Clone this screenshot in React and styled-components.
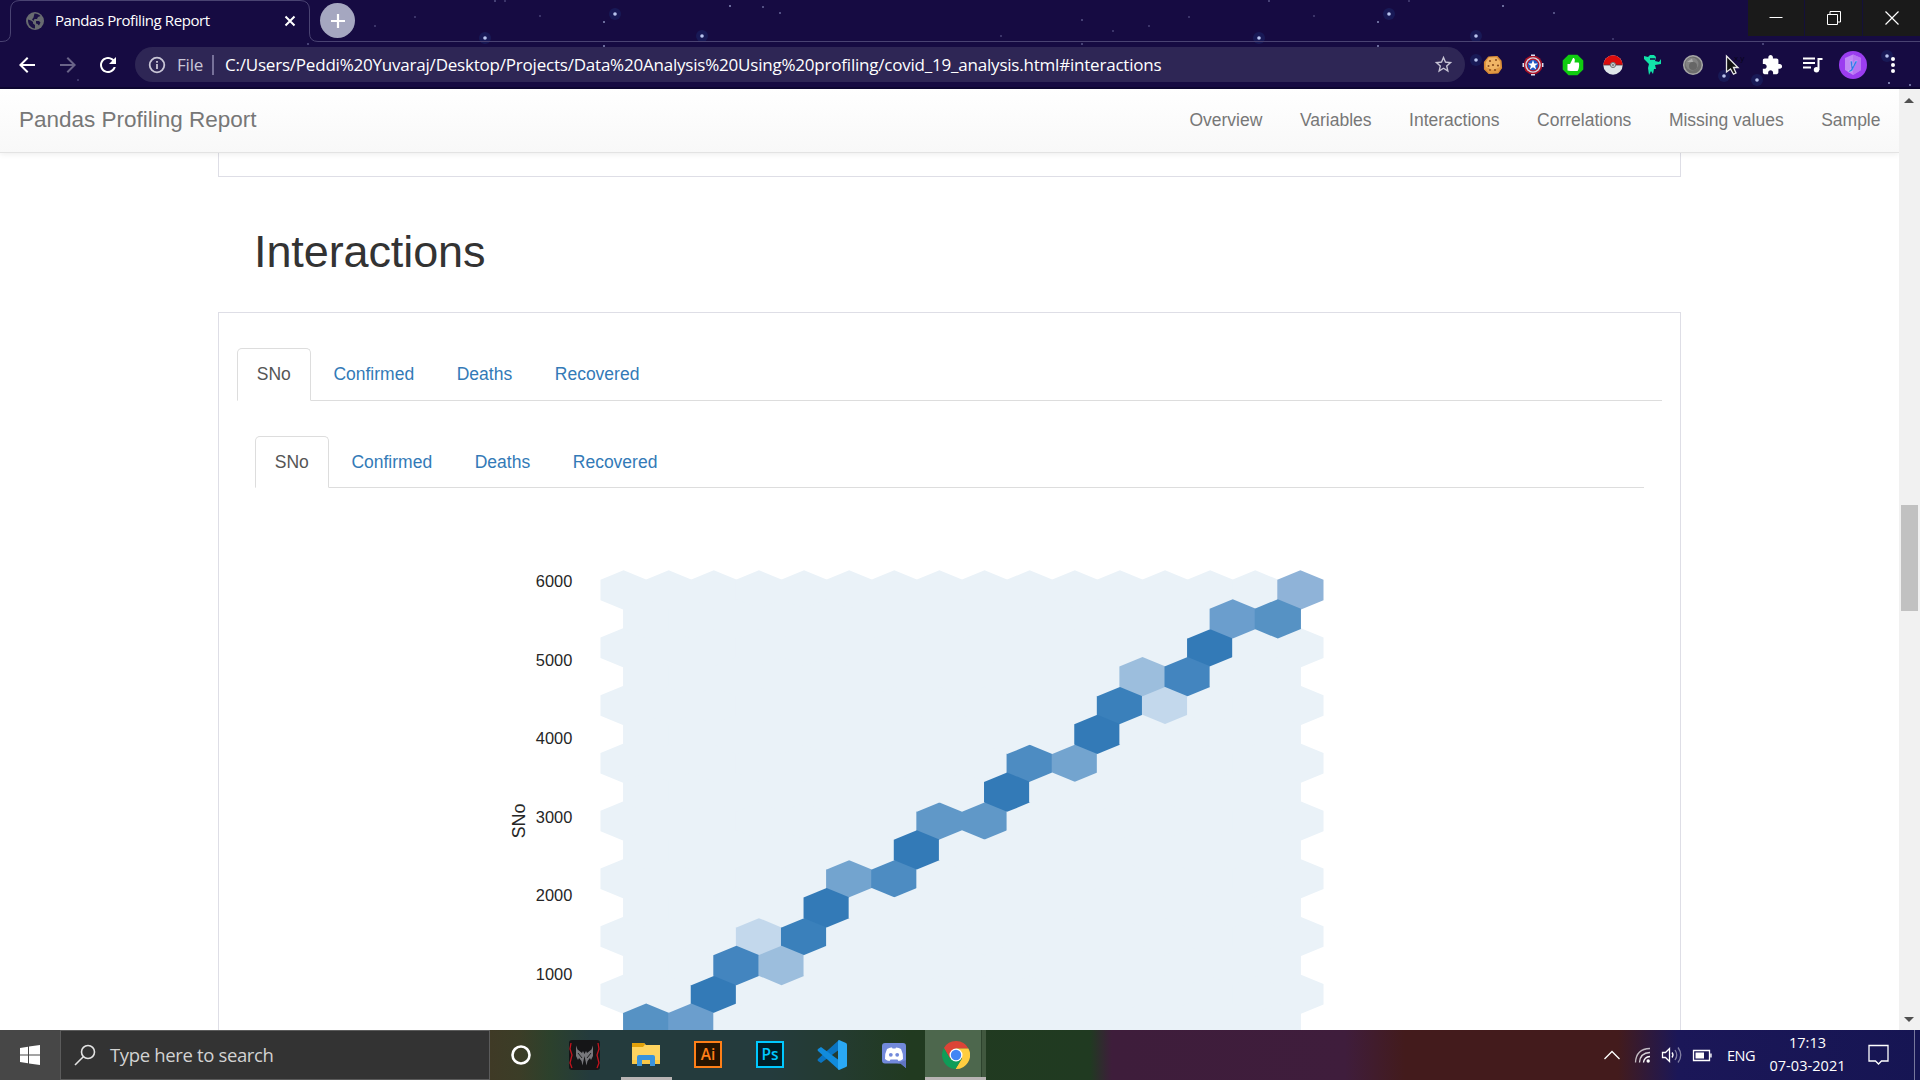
import React from "react";
import styled, { createGlobalStyle, css } from "styled-components";

const ui = `"Open Sans", "Noto Sans", sans-serif`;
const page = `"Liberation Sans", Arial, sans-serif`;

const Global = createGlobalStyle`
  *, *::before, *::after { box-sizing: border-box; }
  body { margin: 0; overflow: hidden; background: #fff; }
  svg { display: block; flex: none; }
`;

const Screen = styled.div`
  width: 1920px;
  height: 1080px;
  display: flex;
  flex-direction: column;
  overflow: hidden;
  font-family: ${page};
`;

/* ---------- browser frame ---------- */
const Frame = styled.header`
  position: relative;
  height: 89px;
  flex: none;
  display: flex;
  flex-direction: column;
  background: #160b42;
  border-bottom: 2px solid #0d0630;
  color: #fff;
  font-family: ${ui};
`;
const Sky = styled.svg`
  position: absolute;
  inset: 0;
`;
const TabStrip = styled.div`
  position: relative;
  height: 42px;
  display: flex;
  align-items: flex-start;
`;
const TabOutline = styled.svg`
  position: absolute;
  left: 0;
  top: 0;
`;
const BrowserTab = styled.div`
  position: relative;
  width: 310px;
  height: 42px;
  padding: 0 12px 0 26px;
  display: flex;
  align-items: center;
`;
const TabTitle = styled.span`
  flex: 1;
  margin-left: 11px;
  padding-bottom: 2px;
  font-size: 15px;
  letter-spacing: -0.42px;
  white-space: nowrap;
`;
const NewTab = styled.div`
  position: relative;
  width: 35px;
  height: 35px;
  margin: 3px 0 0 10px;
  border-radius: 50%;
  background: #a5a7c0;
  display: grid;
  place-items: center;
`;
const WindowButtons = styled.div`
  margin-left: auto;
  display: flex;
  gap: 1px;
  background: #141039;
`;
const WindowButton = styled.div`
  width: ${(p) => p.$width}px;
  height: 36px;
  background: #1a1a1a;
  display: grid;
  place-items: center;
`;
const Toolbar = styled.div`
  position: relative;
  height: 45px;
  display: flex;
  align-items: center;
  padding: 0 16px 0 15px;
`;
const NavButtons = styled.div`
  width: 120px;
  display: flex;
  gap: 16.5px;
`;
const Omnibox = styled.div`
  width: 1330px;
  height: 35px;
  border-radius: 18px;
  background: #2e2655;
  display: flex;
  align-items: center;
  padding: 0 11px 0 13px;
  font-size: 17px;
  white-space: nowrap;
`;
const Scheme = styled.span`
  width: 27px;
  margin-left: 11px;
  color: #c9c6d6;
  letter-spacing: -0.2px;
`;
const Divider = styled.i`
  width: 2px;
  height: 20px;
  margin: 0 11px 0 8px;
  background: #77719a;
`;
const Address = styled.span`
  flex: 1;
  letter-spacing: -0.21px;
`;
const Extensions = styled.div`
  margin-left: 14px;
  display: flex;
  gap: 12px;
`;
const ToolbarEnd = styled.div`
  width: 143px;
  margin-left: auto;
  padding-right: 8px;
  display: flex;
  align-items: center;
  justify-content: space-between;
`;

/* ---------- report page ---------- */
const Viewport = styled.div`
  height: 941px;
  flex: none;
  display: flex;
  overflow: hidden;
  background: #fff;
`;
const Report = styled.main`
  width: 1899px;
  height: 941px;
  overflow: hidden;
  display: flex;
  flex-direction: column;
`;
const Navbar = styled.nav`
  position: relative;
  z-index: 1;
  height: 64px;
  flex: none;
  padding: 0 18.5px 0 19px;
  display: flex;
  justify-content: space-between;
  align-items: center;
  background: linear-gradient(#fff, #f8f8f8);
  border-bottom: 1px solid #e3e3e3;
  box-shadow: 0 1px 6px rgba(0, 0, 0, 0.08);
  color: #777;
`;
const Brand = styled.span`
  padding-bottom: 1px;
  font-size: 22.5px;
  letter-spacing: -0.01px;
`;
const NavLinks = styled.div`
  display: flex;
  gap: 37.5px;
  font-size: 17.5px;
`;
const boxLine = "#dedee6";
const Content = styled.div`
  width: 1463px;
  margin: 0 0 0 218px;
  flex: 1;
  display: flex;
  flex-direction: column;
`;
const PreviousPanel = styled.div`
  height: 24px;
  flex: none;
  border: 1px solid ${boxLine};
  border-top: 0;
`;
const Heading = styled.h1`
  height: 135px;
  flex: none;
  margin: 0;
  padding: 50px 0 0 36px;
  font-size: 45px;
  line-height: 49px;
  letter-spacing: -0.1px;
  font-weight: 400;
  color: #333;
`;
const Panel = styled.section`
  flex: 1;
  border: 1px solid ${boxLine};
  border-bottom: 0;
  padding: 35px 18px 0;
`;
const Inner = styled.div`
  padding: 35px 18px 0;
`;
const TabList = styled.div`
  display: flex;
  gap: 3.1px;
  height: ${(p) => p.$height}px;
  border-bottom: 1px solid #ddd;
`;
const Tab = styled.a`
  height: ${(p) => p.$height}px;
  padding: 0 18.75px;
  line-height: 50px;
  font-size: 17.5px;
  color: #337ab7;
  border: 1px solid transparent;
  border-radius: 5px 5px 0 0;
  ${(p) =>
    p.$active &&
    css`
      color: #555;
      background: #fff;
      border-color: #ddd;
      border-bottom-color: #fff;
    `}
`;
const ChartArea = styled.div`
  padding-top: 52px;
`;
const Chart = styled.svg`
  margin: 0 0 0 245px;
  font-family: ${page};
`;

const Scrollbar = styled.div`
  width: 21px;
  height: 941px;
  background: #f1f1f1;
  display: flex;
  flex-direction: column;
  align-items: center;
`;
const ScrollArrow = styled.svg`
  width: 21px;
  height: 21px;
`;
const Thumb = styled.div`
  width: 17px;
  height: 106px;
  margin-top: 395px;
  margin-bottom: auto;
  background: #c1c1c1;
`;

/* ---------- taskbar ---------- */
const Taskbar = styled.footer`
  height: 50px;
  flex: none;
  display: flex;
  font-family: ${ui};
  color: #fff;
  background: linear-gradient(
    90deg,
    #3f3a26 490px,
    #3b3d27 520px,
    #2c412c 550px,
    #243b3d 590px,
    #243b3d 770px,
    #243b30 840px,
    #213a20 910px,
    #203a21 1090px,
    #3e1d3b 1112px,
    #3f1d3c 1345px,
    #431b1c 1405px,
    #431b1c 1618px,
    #1b1758 1678px,
    #161553 1920px
  );
`;
const Start = styled.div`
  width: 60px;
  background: #474747;
  display: grid;
  place-items: center;
`;
const Search = styled.div`
  width: 430px;
  border: 1px solid #5b5b5b;
  background: #333;
  display: flex;
  align-items: center;
  padding-left: 13px;
`;
const SearchHint = styled.span`
  margin-left: 14px;
  padding-bottom: 2px;
  font-size: 18.5px;
  letter-spacing: -0.35px;
  color: #d2d2d2;
`;
const Apps = styled.div`
  display: flex;
  margin-left: -2px;
`;
const TaskButton = styled.div`
  width: ${(p) => p.$width || 62}px;
  height: 50px;
  display: flex;
  flex-direction: column;
  align-items: center;
  padding-top: 10px;
  ${(p) =>
    p.$active &&
    css`
      background: linear-gradient(90deg, #4d674d 56px, #2d432d 56px, #2d432d 57px, #41583f 57px);
      border-bottom: 3px solid #b8b4b4;
    `}
`;
const RunningMark = styled.i`
  width: 51px;
  height: 3px;
  margin-top: 7px;
  background: #b8b4b4;
`;
const Tile = styled.div`
  width: 28px;
  height: 27px;
  margin-top: 0.5px;
  border: 2px solid ${(p) => p.$tone};
  background: ${(p) => p.$fill};
  color: ${(p) => p.$tone};
  font: 600 15.5px/22px ${ui};
  text-align: center;
`;
const Tray = styled.div`
  margin-left: auto;
  display: flex;
  align-items: center;
  font-size: 14.5px;
`;
const Lang = styled.span`
  width: 44px;
  padding-left: 9px;
  letter-spacing: -0.5px;
`;
const Clock = styled.div`
  width: 77px;
  margin-left: 7px;
  padding-bottom: 2px;
  display: flex;
  flex-direction: column;
  align-items: center;
  line-height: 23px;
  letter-spacing: 0.05px;
  white-space: nowrap;
`;
const NoticeIcon = styled.svg`
  margin-left: 22px;
`;
const ShowDesktop = styled.i`
  width: 6px;
  height: 50px;
  margin-left: 24px;
  border-left: 1px solid #77779c;
`;

/* ---------- data ---------- */
const stars = [
  [485, 38, 1], [615, 14, 1], [702, 36, 1], [1259, 38, 1], [1389, 14, 1], [1476, 36, 1], [1476, 60, 1],
  [1724, 76, 1], [1757, 80, 1], [1887, 56, 1], [1889, 83, 0.8], [1910, 85, 0.7],
  [604, 22, 0.7], [604, 46, 0.7], [375, 26, 0.3], [415, 17, 0.3], [540, 16, 0.3], [495, 1, 0.4], [505, 1, 0.3],
  [308, 44, 0.4], [78, 80, 0.3], [730, 6, 0.7], [763, 7, 0.5], [780, 13, 0.5], [1001, 36, 0.3], [1082, 20, 0.4],
  [1082, 44, 0.4], [1113, 31, 0.3], [1149, 26, 0.3], [1189, 17, 0.3], [1269, 1, 0.4], [1378, 22, 0.7],
  [1378, 46, 0.7], [1314, 16, 0.3], [1409, 1, 0.3], [1503, 6, 0.7], [1554, 13, 0.5], [1763, 44, 0.4], [1613, 39, 0.3],
];

const ROW = 28.88;
const COL = 45.12;
const hexes = [
  [0, 15, "#8fb3d8"],
  [2, 13, "#337ab7"],
  [4, 11, "#3a80bb"], [4, 12, "#c3d8ec"],
  [6, 9, "#4d8cc2"], [6, 10, "#73a4cf"],
  [8, 7, "#6098c8"], [8, 8, "#6098c8"],
  [10, 5, "#73a4cf"], [10, 6, "#4d8cc2"],
  [12, 3, "#c3d8ec"], [12, 4, "#3a80bb"],
  [14, 2, "#337ab7"],
  [1, 13, "#6b9ecd"], [1, 14, "#5692c4"],
  [3, 11, "#9cbedd"], [3, 12, "#4385bf"],
  [5, 10, "#337ab7"],
  [7, 8, "#337ab7"],
  [9, 6, "#337ab7"],
  [11, 4, "#337ab7"],
  [13, 2, "#4385bf"], [13, 3, "#9cbedd"],
  [15, 0, "#5692c4"], [15, 1, "#6b9ecd"],
];
const hexPoints = (row, col) => {
  const x = 123.6 + col * COL + (row % 2 ? COL / 2 : 0);
  const y = 50 + row * ROW;
  const w = 23.1;
  return [[0, -19.7], [w, -10.2], [w, 10.2], [0, 19.7], [-w, 10.2], [-w, -10.2]]
    .map(([dx, dy]) => `${(x + dx).toFixed(2)},${(y + dy).toFixed(2)}`)
    .join(" ");
};
const grid = [0, 1].flatMap((parity) =>
  Array.from({ length: 8 }, (_, r) => r * 2 + parity).flatMap((row) =>
    Array.from({ length: parity ? 15 : 16 }, (_, col) => {
      const hit = hexes.find((h) => h[0] === row && h[1] === col);
      return { row, col, fill: hit ? hit[2] : "#eaf2f8" };
    })
  )
);
const ticks = [6000, 5000, 4000, 3000, 2000, 1000];
const columns = ["SNo", "Confirmed", "Deaths", "Recovered"];
const links = ["Overview", "Variables", "Interactions", "Correlations", "Missing values", "Sample"];

/* ---------- icons ---------- */
const Globe = () => (
  <svg width="18" height="18" viewBox="0 0 18 18">
    <circle cx="9" cy="9" r="9" fill="#686b70" />
    <path d="M2 7.500 L5 8.500 L7 10 V11.500 L9 13 V16.500 C4 16 1.800 12 2 7.500Z M8.500 1.500 C11 1.500 13 2.500 14.500 4 L12 5 L11 7 H8.500 L7.500 9 L6 7.500 L7.500 5.500Z M10 9 H13 L14.500 10.500 L13 13.500 L11.500 12 L10 11.500Z" fill="#1b1145" />
  </svg>
);
const Glyph = ({ d, size = 24, color = "#fff" }) => (
  <svg width={size} height={size} viewBox="0 0 24 24" fill={color}><path d={d} /></svg>
);
const Cookie = () => (
  <svg width="28" height="24" viewBox="0 0 28 24">
    <path d="M9.500 4 L18 3.500 L22 8 L22.500 15 L19 20 L10 20.500 L5.500 16 V9Z" fill="#e09a45" stroke="#d98a35" strokeWidth="1.200" strokeLinejoin="round" />
    <path d="M10 4.500 L17.500 4.500 L21 8.500 L21 14 L14 17 L7 14 L7 9Z" fill="#f0b565" />
    <g fill="#8a4b1c"><circle cx="11" cy="8" r="1.100" /><circle cx="17" cy="7" r="1" /><circle cx="14" cy="12" r="1.100" /><circle cx="19" cy="12.500" r="1.100" /><circle cx="9.500" cy="13" r="1" /><circle cx="16" cy="17" r="1.100" /><circle cx="11" cy="17" r="0.900" /></g>
  </svg>
);
const Shield = () => (
  <svg width="28" height="24" viewBox="0 0 28 24">
    <circle cx="14" cy="12" r="9.500" fill="#a81226" /><circle cx="14" cy="12" r="7.800" fill="#d5d9e4" /><circle cx="14" cy="12" r="6.400" fill="#b81428" /><circle cx="14" cy="12" r="5.300" fill="#1d58c4" />
    <path d="M14 7 L15.300 10.600 H19 L16.100 12.800 L17.200 16.400 L14 14.200 L10.800 16.400 L11.900 12.800 L9 10.600 H12.700Z" fill="#fff" />
    <path d="M12 2.300 H16 M12 21.700 H16 M4.300 10 V14 M23.700 10 V14" stroke="#dbe0f0" strokeWidth="1.500" />
  </svg>
);
const Thumbs = () => (
  <svg width="28" height="24" viewBox="0 0 28 24">
    <path d="M9.500 1.800 H18.500 L24.300 7.500 V16.500 L18.500 22.200 H9.500 L3.700 16.500 V7.500Z" fill="#10cc10" />
    <path d="M8.500 11 H11 L14 5 C16.300 5 16 7.500 15.500 9.500 H19.500 C20.800 10 20 17 18.500 18 H11.500 L8.500 17.500Z" fill="#fff" />
  </svg>
);
const Ball = () => (
  <svg width="28" height="24" viewBox="0 0 28 24">
    <circle cx="14" cy="12" r="9.700" fill="#dfe6e9" /><path d="M4.300 12 A9.700 9.700 0 0 1 23.700 12Z" fill="#dc0c0c" />
    <path d="M4.300 12 H23.700" stroke="#4c3540" strokeWidth="0.800" /><circle cx="14" cy="12" r="2.600" fill="#c6cbce" stroke="#777" /><circle cx="14" cy="12" r="1" fill="#777" />
  </svg>
);
const Imp = () => (
  <svg width="28" height="24" viewBox="0 0 28 24">
    <path d="M5 3 L9 4 L11 2 H15 L17 4 L16 8 L20 9 L22 6 L22 11 L16 12 L17 16 L15 16 L14 21 L12 18 L10 22 L9 15 L10 11 L7 8 L5 6Z" fill="#12e2a8" />
    <path d="M11 6 H16" stroke="#160b42" strokeWidth="1.500" />
  </svg>
);
const Orb = () => (
  <svg width="28" height="24" viewBox="0 0 28 24">
    <circle cx="14" cy="12" r="9.300" fill="#6d6d6d" stroke="#a6a6a6" strokeWidth="1.500" /><circle cx="13" cy="11" r="6.500" fill="#838383" /><circle cx="14" cy="13" r="4" fill="#666" /><path d="M8 9 L13 5.500 L14 9Z" fill="#aaa" />
  </svg>
);
const Pointer = () => (
  <svg width="28" height="24" viewBox="0 0 28 24" overflow="visible">
    <text x="15" y="7.500" fontFamily="Open Sans" fontSize="8" fill="#070418">x,y</text>
    <path d="M7.500 3 L19 14.500 H14.500 L17 20 L14.500 21.200 L11.500 16 L7.500 19Z" fill="#111" stroke="#e8e8e8" strokeWidth="1.300" />
  </svg>
);
const AvatarIcon = styled.svg`
  margin: 0 3px 0 -3px;
`;
const Avatar = () => (
  <AvatarIcon width="28" height="28" viewBox="0 0 28 28">
    <circle cx="14" cy="14" r="14" fill="#9b3df0" /><path d="M14 3.500 L22 7 V19 L14 24 L6 19 V7Z" fill="#c188f6" />
    <path d="M14 3.500 L22 7 V19 L14 24Z" fill="#b874f4" />
    <text x="14" y="17.500" textAnchor="middle" fontFamily="Open Sans" fontSize="14" fontStyle="italic" fontWeight="700" fill="#2673e8" stroke="#d8c6fa" strokeWidth="0.400">y</text>
  </AvatarIcon>
);
const Predator = () => (
  <svg width="31" height="30" viewBox="0 0 31 30">
    <rect width="31" height="30" rx="3" fill="#151517" /><path d="M2 3 L1 9 L3 15 L1 23 L3 28 M29 3 L30 9 L28 15 L30 23 L28 28" stroke="#c3131d" strokeWidth="1.300" fill="none" />
    <path d="M7 5.500 L8.500 9.500 L13 13 L14 11 L15.500 14 L17 11 L18 13 L22.500 9.500 L24 5.500 V16 L22 20 L21 18 L18.500 21 L17.500 25.500 L15.500 16 L13.500 25.500 L12.500 21 L10 18 L9 20 L7 16Z" fill="#77777b" />
    <path d="M9 13 L13 18 M22 13 L18 18" stroke="#222" />
  </svg>
);
const Explorer = () => (
  <svg width="28" height="30" viewBox="0 0 28 30">
    <path d="M0 3 H12 L14 5 H28 V24 H0Z" fill="#ffd460" /><path d="M0 3 H12 L13 4.500 L11 7 H0Z" fill="#e2a10a" /><path d="M0 20 H28 V24 H0Z" fill="#f8c748" />
    <path d="M5 26 V17 Q5 15 7 15 H21 Q23 15 23 17 V26 H18 V20 H10 V26Z" fill="#3a93dc" />
  </svg>
);
const VsCode = () => (
  <svg width="30" height="30" viewBox="0 0 30 30">
    <path d="M22 0 L23 9 L4 23 L1 21 Q0 20 1 19Z" fill="#0a74c2" /><path d="M22 30 L23 21 L4 7 L1 9 Q0 10 1 11Z" fill="#118bdc" />
    <path d="M22 0 L29 3 Q30 3.500 30 4.500 V25.500 Q30 26.500 29 27 L22 30 Q21 30 21 28 V2 Q21 0 22 0Z" fill="#2aa8f5" />
  </svg>
);
const Discord = () => (
  <svg width="24" height="30" viewBox="0 0 24 30">
    <path d="M3 3 H21 Q24 3 24 6 V28 L18.500 23.500 H3 Q0 23.500 0 20.500 V6 Q0 3 3 3Z" fill="#7289da" /><path d="M15 23.500 H18.500 L24 28 V20Z" fill="#6075c2" />
    <path d="M5 9 Q8 7 10 7.500 L10.500 8.500 H13.500 L14 7.500 Q17 7.500 19 9 Q21.500 14 21 19 Q19 21 16.500 21 L15.500 19.500 H8.500 L7.500 21 Q5 21 3 19 Q2.500 14 5 9Z" fill="#fff" />
    <circle cx="8.800" cy="14.800" r="1.900" fill="#7289da" /><circle cx="15.200" cy="14.800" r="1.900" fill="#7289da" />
  </svg>
);
const Chrome = () => (
  <svg width="28" height="30" viewBox="0 0 28 30">
    <path d="M1.900 8 A14 14 0 0 1 26.400 8.400 H14 L8 18.500Z" fill="#db4437" />
    <path d="M26.400 8.400 A14 14 0 0 1 13.500 29 L20 18.500 L14 8.400Z" fill="#ffcd40" />
    <path d="M1.900 8 L8 18.500 L14 21 L19.700 18.500 L13.500 29 A14 14 0 0 1 1.900 8Z" fill="#0f9d58" />
    <circle cx="14" cy="15" r="6.500" fill="#fff" /><circle cx="14" cy="15" r="5.200" fill="#4285f4" />
  </svg>
);

function BrowserFrame() {
  return (
    <Frame>
      <Sky width="1920" height="87">
        {stars.map(([x, y, o], i) => (
          <g key={i}>
            {o === 1 && <circle cx={x} cy={y} r="6" fill="#1d3a86" opacity="0.3" />}
            <circle cx={x} cy={y} r={o === 1 ? 1.8 : 1} fill="#b9c4ee" opacity={o} />
          </g>
        ))}
      </Sky>
      <TabStrip>
        <TabOutline width="1920" height="42" fill="none" stroke="#4a4372">
          <path d="M0 41.500 H2 Q10.500 41.500 10.500 33 V10 Q10.500 0.500 20 0.500 H300 Q309.500 0.500 309.500 10 V33 Q309.500 41.500 318 41.500 H1920" />
        </TabOutline>
        <BrowserTab>
          <Globe />
          <TabTitle>Pandas Profiling Report</TabTitle>
          <svg width="16" height="16" viewBox="0 0 16 16" stroke="#fff" strokeWidth="2"><path d="M3.500 3.500 L12.500 12.500 M12.500 3.500 L3.500 12.500" /></svg>
        </BrowserTab>
        <NewTab><svg width="16" height="16" stroke="#fff" strokeWidth="2.200"><path d="M8 1 V15 M1 8 H15" /></svg></NewTab>
        <WindowButtons>
          <WindowButton $width={56}><svg width="14" height="14" stroke="#fff" fill="none"><path d="M0.500 6.500 H13.500" /></svg></WindowButton>
          <WindowButton $width={57}><svg width="14" height="14" stroke="#fff" fill="none"><path d="M0.500 3.500 H10.500 V13.500 H0.500Z M3 3 V0.500 H13.500 V11 H11" /></svg></WindowButton>
          <WindowButton $width={57}><svg width="14" height="14" stroke="#fff" strokeWidth="1.200" fill="none"><path d="M0.500 0.500 L13.500 13.500 M13.500 0.500 L0.500 13.500" /></svg></WindowButton>
        </WindowButtons>
      </TabStrip>
      <Toolbar>
        <NavButtons>
          <Glyph d="M20 11H7.830l5.590-5.590L12 4l-8 8 8 8 1.410-1.410L7.830 13H20v-2z" />
          <Glyph color="#6a6488" d="M12 4l-1.410 1.410L16.170 11H4v2h12.170l-5.580 5.590L12 20l8-8z" />
          <Glyph d="M17.650 6.350C16.200 4.900 14.210 4 12 4c-4.420 0-7.990 3.580-7.990 8s3.570 8 7.990 8c3.730 0 6.840-2.550 7.730-6h-2.080c-.82 2.330-3.040 4-5.650 4-3.310 0-6-2.690-6-6s2.690-6 6-6c1.660 0 3.140.69 4.220 1.780L13 11h7V4l-2.350 2.350z" />
        </NavButtons>
        <Omnibox>
          <svg width="18" height="18" fill="none" stroke="#c9c6d6" strokeWidth="1.800"><circle cx="9" cy="9" r="7.300" /><path d="M9 8 V13 M9 5 V6.800" /></svg>
          <Scheme>File</Scheme>
          <Divider />
          <Address>C:/Users/Peddi%20Yuvaraj/Desktop/Projects/Data%20Analysis%20Using%20profiling/covid_19_analysis.html#interactions</Address>
          <Glyph size={21} color="#c6c3d4" d="M22 9.240l-7.190-.62L12 2 9.190 8.630 2 9.240l5.460 4.730L5.820 21 12 17.270 18.180 21l-1.630-7.030L22 9.240zM12 15.400l-3.760 2.270 1-4.280-3.320-2.880 4.380-.38L12 6.100l1.710 4.040 4.380.38-3.320 2.880 1 4.280L12 15.400z" />
        </Omnibox>
        <Extensions>
          <Cookie /><Shield /><Thumbs /><Ball /><Imp /><Orb /><Pointer />
        </Extensions>
        <ToolbarEnd>
          <Glyph size={22} d="M20.500 11H19V7c0-1.100-.9-2-2-2h-4V3.500C13 2.120 11.880 1 10.500 1S8 2.120 8 3.500V5H4c-1.100 0-1.990.9-1.990 2v3.800H3.500c1.490 0 2.700 1.210 2.700 2.700s-1.210 2.700-2.700 2.700H2V20c0 1.100.9 2 2 2h3.800v-1.500c0-1.490 1.210-2.700 2.700-2.700 1.490 0 2.700 1.210 2.700 2.700V22H17c1.100 0 2-.9 2-2v-4h1.500c1.380 0 2.500-1.120 2.500-2.500S21.880 11 20.500 11z" />
          <svg width="20" height="18" viewBox="0 0 20 18" fill="none" stroke="#fff" strokeWidth="2"><path d="M0 2.500 H12 M0 7 H12 M0 11.500 H8 M15.500 14 V3 H19.500" /><circle cx="13.500" cy="13.800" r="2.700" fill="#fff" stroke="none" /></svg>
          <Avatar />
          <svg width="6" height="20" fill="#fff"><circle cx="3" cy="4" r="2" /><circle cx="3" cy="10" r="2" /><circle cx="3" cy="16" r="2" /></svg>
        </ToolbarEnd>
      </Toolbar>
    </Frame>
  );
}

function Tabs({ height }) {
  return (
    <TabList $height={height}>
      {columns.map((c, i) => (
        <Tab key={c} $height={height} $active={i === 0}>{c}</Tab>
      ))}
    </TabList>
  );
}

function HexChart() {
  return (
    <Chart width="860" height="540" viewBox="0 0 860 540">
      {grid.map((h) => (
        <polygon key={`${h.row}-${h.col}`} points={hexPoints(h.row, h.col)} fill={h.fill} />
      ))}
      {ticks.map((t, i) => (
        <text key={t} x="72.300" y={47.3 + i * 78.45} textAnchor="end" fontSize="16.400" fill="#262626">{t}</text>
      ))}
      <text transform="translate(24.800 281) rotate(-90)" textAnchor="middle" fontSize="17.800" fill="#262626">SNo</text>
    </Chart>
  );
}

export default function App() {
  return (
    <Screen>
      <Global />
      <BrowserFrame />
      <Viewport>
        <Report>
          <Navbar>
            <Brand>Pandas Profiling Report</Brand>
            <NavLinks>{links.map((l) => <span key={l}>{l}</span>)}</NavLinks>
          </Navbar>
          <Content>
            <PreviousPanel />
            <Heading>Interactions</Heading>
            <Panel>
              <Tabs height={53} />
              <Inner>
                <Tabs height={52} />
                <ChartArea><HexChart /></ChartArea>
              </Inner>
            </Panel>
          </Content>
        </Report>
        <Scrollbar>
          <ScrollArrow><path d="M5 14 L10 9 L15 14Z" fill="#505050" /></ScrollArrow>
          <Thumb />
          <ScrollArrow><path d="M5 8 L10 13 L15 8Z" fill="#505050" /></ScrollArrow>
        </Scrollbar>
      </Viewport>
      <Taskbar>
        <Start><svg width="20" height="20" fill="#fff"><path d="M0 3 L8 1.800 V9.500 H0Z M9 1.600 L20 0 V9.500 H9Z M0 10.500 H8 V18.200 L0 17Z M9 10.500 H20 V20 L9 18.400Z" /></svg></Start>
        <Search>
          <svg width="22" height="22" fill="none" stroke="#e4e4e4" strokeWidth="1.600"><circle cx="14" cy="8" r="6.500" /><path d="M9.300 12.700 L1 21" /></svg>
          <SearchHint>Type here to search</SearchHint>
        </Search>
        <Apps>
          <TaskButton $width={65}><svg width="20" height="30" fill="none" stroke="#fff" strokeWidth="2.600"><circle cx="10" cy="15" r="8.500" /></svg></TaskButton>
          <TaskButton><Predator /></TaskButton>
          <TaskButton><Explorer /><RunningMark /></TaskButton>
          <TaskButton><Tile $tone="#ff7f18" $fill="#261300">Ai</Tile></TaskButton>
          <TaskButton><Tile $tone="#00c8ff" $fill="#001d26">Ps</Tile></TaskButton>
          <TaskButton><VsCode /></TaskButton>
          <TaskButton><Discord /></TaskButton>
          <TaskButton $width={61} $active><Chrome /></TaskButton>
        </Apps>
        <Tray>
          <svg width="122" height="30" fill="none" stroke="#fff" strokeWidth="1.300">
            <path d="M8.500 19 L16 11.500 L23.500 19" />
            <g><path d="M54 8.500 Q40 9 39.500 22.500" opacity="0.700" /><path d="M54 12.500 Q44 13 43.500 22.500" opacity="0.800" /><path d="M54 16.500 Q48 17 47.500 22.500" /><circle cx="52.200" cy="21" r="1.700" fill="#fff" stroke="none" /></g>
            <path d="M66.500 12.500 H69.500 L73.500 8.500 V21.500 L69.500 17.500 H66.500Z" /><path d="M76 12.500 Q78 15 76 17.500" /><path d="M79 10 Q82.500 15 79 20 M82 7.500 Q87.500 15 82 22.500" opacity="0.450" />
            <path d="M97.500 10.500 H113.500 V20.500 H97.500Z M115 13.500 V17.500" /><path d="M99.500 12.500 H108 V18.500 H99.500Z" fill="#fff" stroke="none" />
          </svg>
          <Lang>ENG</Lang>
          <Clock><span>17:13</span><span>07-03-2021</span></Clock>
          <NoticeIcon width="22" height="22" fill="none" stroke="#fff" strokeWidth="1.300"><path d="M1 1.500 H20 V17 H13.500 L10.500 20 L7.500 17 H1Z" /></NoticeIcon>
          <ShowDesktop />
        </Tray>
      </Taskbar>
    </Screen>
  );
}
